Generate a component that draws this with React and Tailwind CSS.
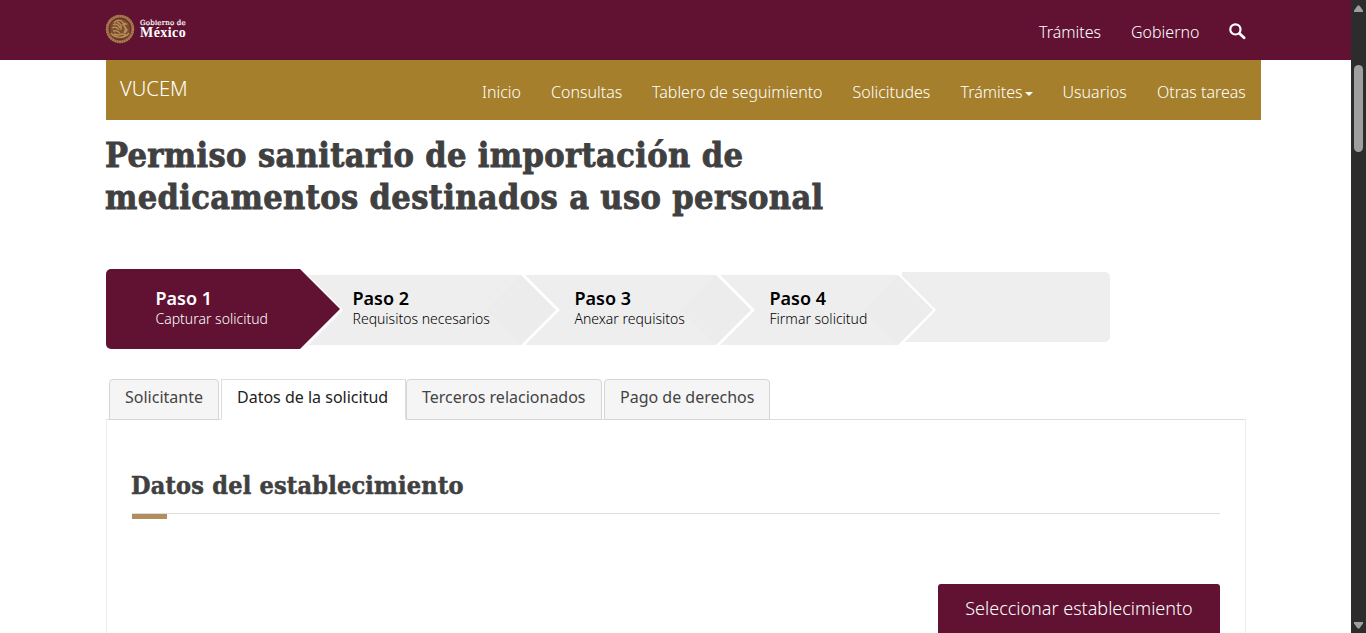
import React from 'react';

const NAV = [
  ['Inicio', 'w-[39px]'],
  ['Consultas', 'w-[71px]'],
  ['Tablero de seguimiento', 'w-[170.5px]'],
  ['Solicitudes', 'w-[78px]'],
  ['Trámites', 'w-[72px]'],
  ['Usuarios', 'w-[64.5px]'],
  ['Otras tareas', 'w-[89px]'],
];

const STEPS = [
  { title: 'Paso 2', text: 'Requisitos necesarios', box: 'w-[248px] -ml-[32px] pl-[44.5px] [clip-path:polygon(0_0,213px_0,248px_50%,213px_100%,0_100%,35px_50%)]' },
  { title: 'Paso 3', text: 'Anexar requisitos', box: 'w-[226px] -ml-[31px] pl-[49.5px] [clip-path:polygon(0_0,191px_0,226px_50%,191px_100%,0_100%,35px_50%)]' },
  { title: 'Paso 4', text: 'Firmar solicitud', box: 'w-[213px] -ml-[31px] pl-[49.5px] [clip-path:polygon(0_0,178px_0,213px_50%,178px_100%,0_100%,35px_50%)]' },
];

const TABS = [
  { label: 'Solicitante', box: 'w-[110px] h-[41px] rounded-t border-[#d5d5d5] bg-[#f5f5f5] text-[#444]' },
  { label: 'Datos de la solicitud', box: 'ml-[2px] w-[185px] h-[41px] border-[#ddd] !border-b-white bg-white text-[#222]' },
  { label: 'Terceros relacionados', box: 'w-[196px] h-[41px] rounded-t border-[#d5d5d5] bg-[#f5f5f5] text-[#444]' },
  { label: 'Pago de derechos', box: 'ml-[2px] w-[166px] h-[41px] rounded-t border-[#d5d5d5] bg-[#f5f5f5] text-[#444]' },
];

function Seal() {
  return (
    <svg width="30" height="30" viewBox="0 0 30 30" fill="none" stroke="#a57f2c">
      <circle cx="15" cy="15" r="14" fill="#7d4a32" stroke="none" />
      <circle cx="15" cy="15" r="12.9" strokeWidth="2.6" stroke="#a9804a" strokeDasharray="1.9 .5" />
      <circle cx="15" cy="15" r="10.7" strokeWidth=".9" stroke="#6b2434" />
      <path d="M9 9c3-4 8-3 9 0l3 1-3 1c3 2 3 5 1 8M8 11c3-2 6 0 7 3M7 14c3-2 6 0 7 2M8 17c3-1 5 0 7 2M12 8c3 1 5 4 4 8" strokeWidth="1.5" stroke="#b58f55" />
      <path d="M6 19c3 5 14 6 18 0M9 20l4 1 4-1 4 1M20 13l2 3-2 3" strokeWidth="1.5" stroke="#b58f55" />
    </svg>
  );
}

function Header() {
  return (
    <header className="flex h-[60px] shrink-0 items-start justify-between bg-[#611232] pl-[105px] pr-[105px]">
      <div className="flex items-start pt-[14px]">
        <Seal />
        <div className="ml-[5px] pt-[5px] font-['DejaVu_Serif','Liberation_Serif',serif] text-white">
          <div className="whitespace-nowrap text-[7px] leading-[8px] tracking-[0.2px] [-webkit-text-stroke:0.2px_#fff]">Gobierno de</div>
          <div className="whitespace-nowrap font-['Liberation_Serif',serif] text-[14px] font-bold leading-[12px] tracking-[0.45px]">México</div>
        </div>
      </div>
      <div className="flex items-start whitespace-nowrap pt-[20px] text-[16px] font-light leading-6 text-white">
        <span className="w-[92px]">Trámites</span>
        <span className="w-[98px]">Gobierno</span>
        <svg className="mt-[3px]" width="17" height="17" viewBox="0 0 17 17" fill="none" stroke="#fff">
          <circle cx="6.4" cy="6.4" r="5.1" strokeWidth="2.2" />
          <path d="M10.5 10.5l4.6 4.3" strokeWidth="2.8" strokeLinecap="round" />
        </svg>
      </div>
    </header>
  );
}

function Subnav() {
  return (
    <nav className="flex h-[60px] w-[1155px] items-start justify-between bg-[#a57f2c] pl-[14px] pr-[15px] font-light text-white">
      <span className="pt-[16px] text-[20.2px] leading-6">VUCEM</span>
      <div className="flex gap-[30px] whitespace-nowrap pt-[20px] text-[16px] leading-6">
        {NAV.map(([label, width]) => (
          <span key={label} className={`flex items-center ${width}`}>
            {label}
            {label === 'Trámites' && (
              <svg className="ml-[2px] mt-[3px] shrink-0" width="8" height="4" viewBox="0 0 8 4" fill="#fff"><path d="M0 0h8L4 4z" /></svg>
            )}
          </span>
        ))}
      </div>
    </nav>
  );
}

function Wizard() {
  return (
    <div className="mt-[51px] flex items-start">
      <div className="h-[80px] w-[234px] rounded-l-[5px] bg-[#611232] pl-[49.5px] pt-[19px] text-white [clip-path:polygon(0_0,194px_0,234px_50%,194px_100%,0_100%)]">
        <div className="text-[18px] font-semibold leading-[21px]">Paso 1</div>
        <div className="text-[14px] font-light leading-[20px]">Capturar solicitud</div>
      </div>
      {STEPS.map((s) => (
        <div key={s.title} className={`relative mt-[6px] h-[70px] shrink-0 whitespace-nowrap bg-[#eee] pt-[13px] text-black ${s.box}`}>
          <div className="absolute right-0 top-0 h-[70px] w-[70px] bg-[#ececec] [clip-path:polygon(0_50%,50%_0,100%_50%,50%_100%)]" />
          <div className="relative text-[18px] font-semibold leading-[21px]">{s.title}</div>
          <div className="relative text-[14px] font-light leading-[20px]">{s.text}</div>
        </div>
      ))}
      <div className="-ml-[31px] mt-[3px] h-[70px] w-[208px] rounded-r-[5px] bg-[#eee] [clip-path:polygon(0_0,100%_0,100%_100%,3px_100%,34px_38px,0_4px)]" />
    </div>
  );
}

function Scrollbar() {
  return (
    <div className="flex w-[15px] shrink-0 flex-col items-center bg-[#2c2c2c]">
      <svg className="mt-[5px]" width="9" height="7" viewBox="0 0 9 7" fill="#9f9f9f"><path d="M3.7.5h1.6L9 5.5V7H0V5.5z" /></svg>
      <div className="mt-[53px] h-[87px] w-[9px] rounded-full bg-[#9f9f9f]" />
      <svg className="mb-[4px] mt-auto" width="9" height="7" viewBox="0 0 9 7" fill="#9f9f9f"><path d="M0 0h9v1.5L5.3 6.5H3.7L0 1.5z" /></svg>
    </div>
  );
}

export default function App() {
  return (
    <div className="flex h-[633px] w-[1366px] overflow-hidden bg-white font-['Noto_Sans',sans-serif]">
      <div className="flex min-w-0 flex-1 flex-col">
        <Header />
        <main className="flex flex-1 flex-col pl-[106px]">
          <Subnav />
          <h1 className="-ml-px mt-[14px] whitespace-nowrap font-['DejaVu_Serif_Condensed','DejaVu_Serif',serif] text-[34px] font-bold leading-[42px] text-[#404041] [-webkit-text-stroke:0.8px_#404041] [font-stretch:condensed]">
            <span className="block tracking-[0.37px]">Permiso sanitario de importación de</span>
            <span className="block tracking-[0.37px]">medicamentos destinados a uso personal</span>
          </h1>
          <Wizard />
          <div className="relative mt-[30px] flex pl-[3px]">
            {TABS.map((t) => (
              <div key={t.label} className={`shrink-0 whitespace-nowrap border pl-[15px] pt-[5px] text-[16px] leading-6 ${t.box}`}>{t.label}</div>
            ))}
          </div>
          <section className="-mt-px flex w-[1140px] flex-1 flex-col border border-b-0 border-[#eee] border-t-[#ddd] px-[25px] pt-[46px]">
            <h2 className="h-[48px] whitespace-nowrap border-b border-[#ddd] font-['DejaVu_Serif_Condensed','DejaVu_Serif',serif] text-[25px] font-bold leading-[40px] tracking-[0.21px] text-[#404041] [-webkit-text-stroke:0.5px_#404041] [font-stretch:condensed]">
              <span className="-ml-px">Datos del establecimiento</span>
            </h2>
            <div className="h-[5px] w-[35px] bg-[#b38e5d]" />
            <button className="mt-[65px] h-[49px] w-[282px] shrink-0 self-end whitespace-nowrap rounded-t-[3px] bg-[#611232] text-[18px] font-light text-white">Seleccionar establecimiento</button>
          </section>
        </main>
      </div>
      <Scrollbar />
    </div>
  );
}
